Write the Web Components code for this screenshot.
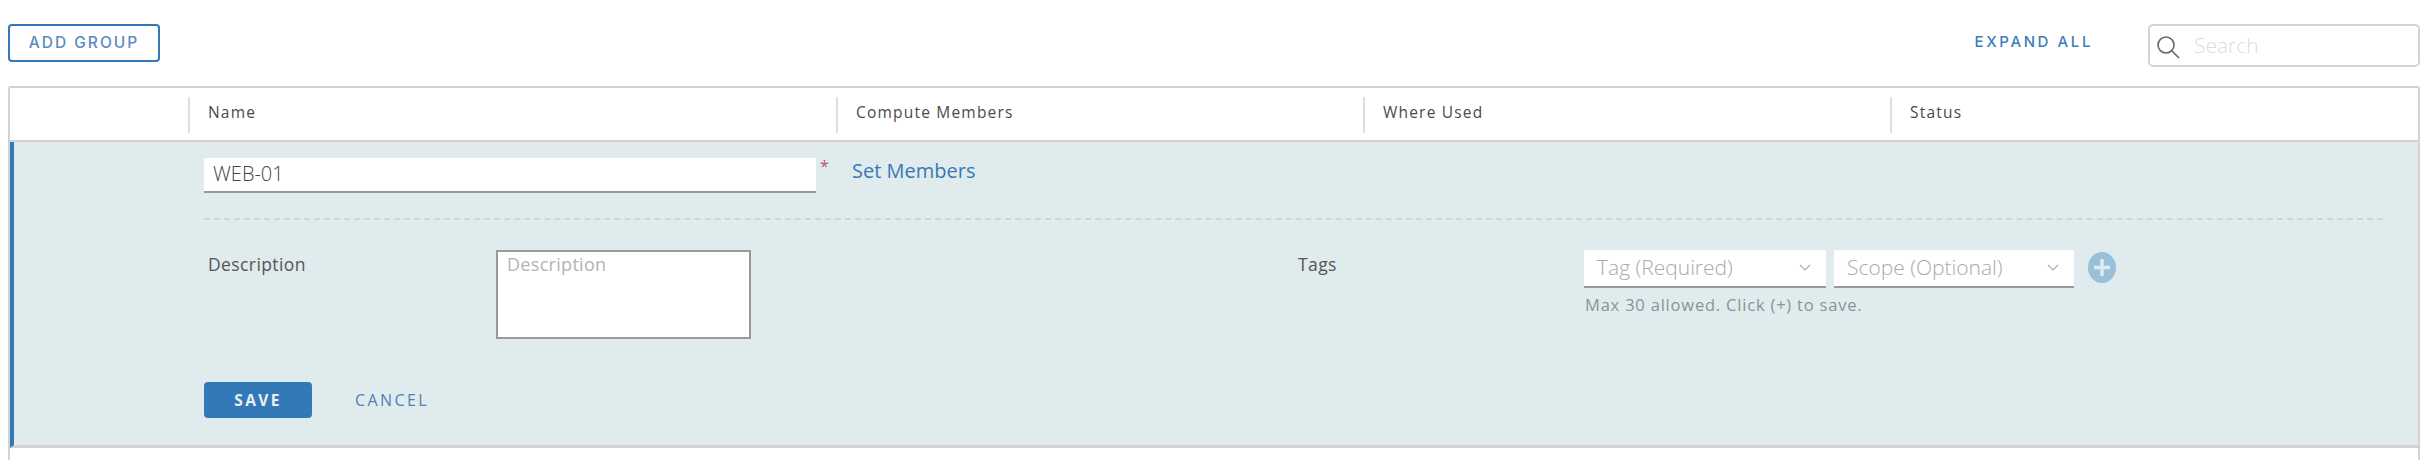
<!DOCTYPE html>
<html>
<head>
<meta charset="utf-8">
<title>Groups</title>
<style>
    html, body { margin: 0; background: #fff; }
    body { height: 460px; overflow: hidden; font-family: "Open Sans", sans-serif; color: #444; }
</style>
</head>
<body>

<groups-page>
    <groups-toolbar></groups-toolbar>
    <groups-grid>
        <grid-header></grid-header>
        <group-editor></group-editor>
    </groups-grid>
</groups-page>

<script>
// Page shell
class GroupsPage extends HTMLElement {
    connectedCallback() {
        this.attachShadow({ mode: 'open' }).innerHTML = `
            <style>
                :host { display: block; padding: 24px 8px 0 8px; }
            </style>
            <slot></slot>`;
    }
}

// Top bar: add button on the left, expand all and search on the right
class GroupsToolbar extends HTMLElement {
    connectedCallback() {
        this.attachShadow({ mode: 'open' }).innerHTML = `
            <style>
                :host { display: flex; align-items: flex-start; height: 62px; }
                button {
                    width: 152px; height: 38px; padding: 0 0 2px 0; box-sizing: border-box; background: #fff;
                    border: 2px solid #3379b8; border-radius: 4px; color: #5a8cbd;
                    font: 500 15.5px Inter, sans-serif; letter-spacing: 2px;
                }
                .expand {
                    margin-left: auto; margin-right: 55px; padding-top: 8px;
                    color: #3f7cb8; font: 500 15px/20px Inter, sans-serif; letter-spacing: 2.6px;
                }
                .search {
                    width: 272px; height: 43px; box-sizing: border-box; display: flex; align-items: center;
                    border: 2px solid #d4d4d4; border-radius: 5px; padding-left: 6px; gap: 14px;
                }
                .search svg { width: 24px; height: 24px; margin-top: 2px; }
                .search span { color: #dcdcdc; font-size: 21px; font-weight: 300; margin-top: -2px; }
            </style>
            <button>ADD GROUP</button>
            <span class="expand">EXPAND ALL</span>
            <div class="search">
                <svg viewBox="0 0 24 24" fill="none" stroke="#666" stroke-width="1.6">
                    <circle cx="10" cy="10" r="8"/>
                    <path d="M16 16l7 7"/>
                </svg>
                <span>Search</span>
            </div>`;
    }
}

// Bordered grid, open at the bottom
class GroupsGrid extends HTMLElement {
    connectedCallback() {
        this.attachShadow({ mode: 'open' }).innerHTML = `
            <style>
                :host {
                    display: block; height: 374px; box-sizing: border-box;
                    border: 2px solid #d2d2d2; border-bottom: 0; border-radius: 3px 3px 0 0;
                }
            </style>
            <slot></slot>`;
    }
}

// Column heads
class GridHeader extends HTMLElement {
    connectedCallback() {
        const columns = ['Name', 'Compute Members', 'Where Used', 'Status'];
        this.attachShadow({ mode: 'open' }).innerHTML = `
            <style>
                :host {
                    display: grid; grid-template-columns: 178px 648px 527px 527px 1fr; align-items: center;
                    height: 54px; box-sizing: border-box; border-bottom: 2px solid #d2d2d2; padding-top: 8px; padding-bottom: 7px;
                }
                div {
                    height: 36px; box-sizing: border-box; border-left: 2px solid #dedede; padding-left: 18px;
                    color: #4a4a4a; font-size: 15.5px; font-weight: 500; line-height: 31px; letter-spacing: 1.2px;
                }
            </style>
            <span></span>
            ${columns.map(c => `<div>${c}</div>`).join('')}`;
    }
}

// Underlined white field, used for the name and both tag pickers
class FieldBox extends HTMLElement {
    connectedCallback() {
        const chevron = this.hasAttribute('chevron') ? `
            <svg viewBox="0 0 12 8" fill="none" stroke="#aaa" stroke-width="1.1"><path d="M1 1l5 5 5-5"/></svg>` : '';
        this.attachShadow({ mode: 'open' }).innerHTML = `
            <style>
                :host {
                    display: flex; align-items: center; box-sizing: border-box; background: #fff;
                    border-bottom: 2px solid #999; padding: 0 10px 0 13px;
                }
                slot { display: block; flex: 1; margin-top: -2px; }
                svg { width: 12px; height: 8px; margin-right: 5px; }
            </style>
            <slot></slot>${chevron}`;
    }
}

// Inline edit form inside the expanded row
class GroupEditor extends HTMLElement {
    connectedCallback() {
        this.attachShadow({ mode: 'open' }).innerHTML = `
            <style>
                :host {
                    display: block; height: 306px; box-sizing: border-box;
                    background: #e0ebed; border-left: 4px solid #3379b8; border-bottom: 3px solid #d2d2d2;
                    padding: 16px 0 0 190px;
                }
                .top { display: flex; align-items: flex-start; height: 60px; border-bottom: 2px dashed #d4d4d4; margin-right: 35px; }
                .name { width: 612px; height: 35px; color: #444; font-size: 20px; font-weight: 300; padding-left: 9px; }
                .req { width: 36px; color: #c0506a; font-size: 16px; line-height: 16px; padding: 0 0 0 4px; box-sizing: border-box; }
                .link { color: #3a78b5; font-size: 20px; line-height: 26px; }
                .mid { display: flex; align-items: flex-start; padding-top: 30px; height: 133px; box-sizing: border-box; }
                label { font-size: 17.5px; letter-spacing: .4px; line-height: 28px; color: #555; padding-left: 4px; }
                .desc { width: 292px; box-sizing: border-box; }
                .area {
                    width: 255px; height: 89px; box-sizing: border-box; background: #fff; border: 2px solid #999;
                    padding: 0 9px; color: #b4b4b4; font-size: 18px; letter-spacing: .3px; line-height: 24px;
                }
                .tags-label { width: 290px; margin-left: 543px; box-sizing: border-box; }
                .pickers { display: flex; align-items: flex-start; gap: 8px; }
                .pickers field-box { height: 38px; color: #aaa; font-size: 21px; font-weight: 300; }
                .plus { width: 28px; height: 31px; margin: 2px 0 0 6px; }
                .hint { margin-top: 5px; color: #8a9398; font-size: 16.500px; padding-left: 1px; letter-spacing: .8px; }
                .actions { display: flex; align-items: center; gap: 43px; margin-top: 29px; }
                .save {
                    width: 108px; height: 36px; padding: 0; border: 0; border-radius: 4px; background: #3379b8; color: #e8f0f6;
                    font: 700 15.5px "Open Sans", sans-serif; letter-spacing: 2.400px;
                }
                .cancel { color: #4f82b6; font: 500 16px "Open Sans", sans-serif; letter-spacing: 2.400px; }
            </style>
            <div class="top">
                <field-box class="name">WEB-01</field-box>
                <span class="req">*</span>
                <span class="link">Set Members</span>
            </div>
            <div class="mid">
                <label class="desc">Description</label>
                <div class="area">Description</div>
                <label class="tags-label">Tags</label>
                <div>
                    <div class="pickers">
                        <field-box chevron style="width:242px">Tag (Required)</field-box>
                        <field-box chevron style="width:240px">Scope (Optional)</field-box>
                        <svg class="plus" viewBox="0 0 28 31">
                            <ellipse cx="14" cy="15.5" rx="14" ry="15.5" fill="#98c0d8"/>
                            <path d="M14 7v17M6 15.500h16" stroke="#e0ebed" stroke-width="3.500"/>
                        </svg>
                    </div>
                    <div class="hint">Max 30 allowed. Click (+) to save.</div>
                </div>
            </div>
            <div class="actions">
                <button class="save">SAVE</button>
                <span class="cancel">CANCEL</span>
            </div>`;
    }
}

customElements.define('groups-page', GroupsPage);
customElements.define('groups-toolbar', GroupsToolbar);
customElements.define('groups-grid', GroupsGrid);
customElements.define('grid-header', GridHeader);
customElements.define('field-box', FieldBox);
customElements.define('group-editor', GroupEditor);
</script>

</body>
</html>
